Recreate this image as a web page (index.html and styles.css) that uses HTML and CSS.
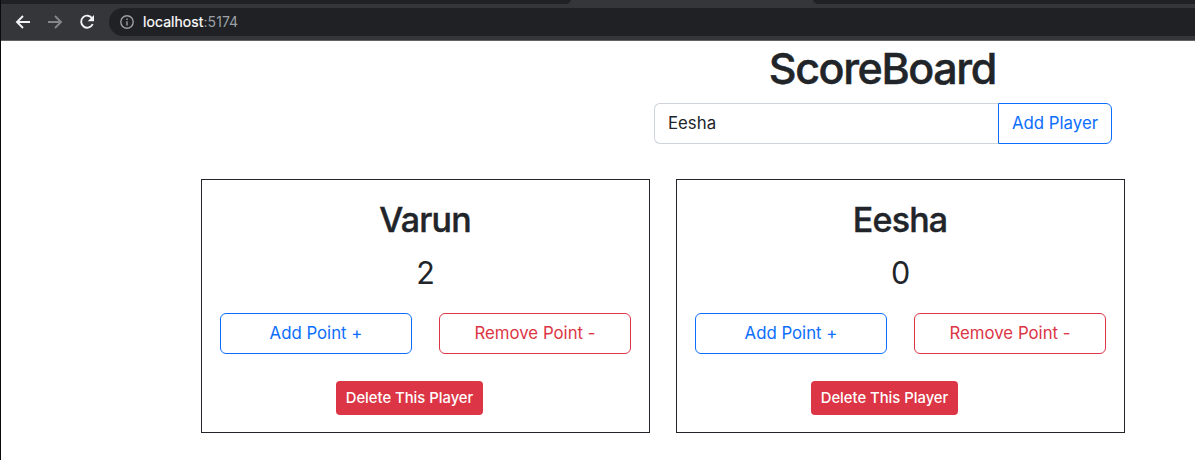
FILE: index.html
```html
<!DOCTYPE html>
<html lang="en">
<head>
<meta charset="utf-8">
<title>ScoreBoard</title>
<link rel="stylesheet" href="styles.css">
</head>
<body>
<div class="window">
  <header class="chrome">
    <div class="tabstrip">
      <div class="tabs-left"></div>
      <div class="tab-active"></div>
      <div class="tabs-right"></div>
    </div>
    <div class="toolbar">
      <svg class="nav" viewBox="0 0 16 16"><path d="M15 8H2.2M8 2L2 8l6 6" /></svg>
      <svg class="nav nav-off" viewBox="0 0 16 16"><path d="M1 8h12.8M8 2l6 6-6 6" /></svg>
      <svg class="nav" viewBox="0 0 16 16"><path d="M13.2 4.4A6 6 0 1 0 13.7 10" /><path class="solid" d="M15 1v6.3H8.7z" /></svg>
      <div class="address">
        <svg class="info" viewBox="0 0 14 14"><circle cx="7" cy="7" r="6.2" /><path d="M7 6.2v4.2M7 3.6v1.5" /></svg>
        <span class="url"><span class="host">localhost</span>:5174</span>
      </div>
    </div>
  </header>
  <main class="page">
    <h1 class="title">ScoreBoard</h1>
    <form class="add-form">
      <div class="field">Eesha</div>
      <button type="button" class="btn add-player">Add Player</button>
    </form>
    <div class="players">
      <section class="card">
        <h2 class="name">Varun</h2>
        <p class="score">2</p>
        <div class="actions">
          <button class="btn primary">Add Point +</button>
          <button class="btn danger">Remove Point -</button>
        </div>
        <button class="delete">Delete This Player</button>
      </section>
      <section class="card">
        <h2 class="name">Eesha</h2>
        <p class="score">0</p>
        <div class="actions">
          <button class="btn primary">Add Point +</button>
          <button class="btn danger">Remove Point -</button>
        </div>
        <button class="delete">Delete This Player</button>
      </section>
    </div>
  </main>
</div>
</body>
</html>
```
FILE: styles.css
```css
* { box-sizing: border-box; }
body {
  margin: 0;
  background: #fff;
  color: #212529;
  font-family: Inter, "Liberation Sans", sans-serif;
  overflow: hidden;
}
.window { height: 460px; border-left: 1px solid #0b0b0c; }
.chrome { height: 41px; background: #35363a; border-bottom: 1px solid #626266; }
.tabstrip { display: flex; height: 4px; }
.tabs-left { width: 570px; background: #202124; border-bottom-right-radius: 6px 4px; }
.tab-active { width: 242px; }
.tabs-right { flex: 1; background: #202124; border-bottom-left-radius: 6px 4px; }
.toolbar { display: flex; align-items: center; height: 36px; padding-left: 14px; }
.nav { width: 16px; height: 16px; margin-right: 16px; fill: none; stroke: #f1f3f4; stroke-width: 1.9; }
.nav-off { stroke: #85868a; }
.nav .solid { fill: #f1f3f4; stroke: none; }
.address {
  flex: 1;
  display: flex;
  align-items: center;
  height: 28px;
  margin-left: -2px;
  padding-left: 11px;
  background: #202124;
  border-radius: 14px 0 0 14px;
}
.info { width: 14px; height: 14px; fill: none; stroke: #9aa0a6; stroke-width: 1.4; }
.url { margin-left: 9px; font-size: 14px; line-height: 28px; letter-spacing: 0.07px; color: #9aa0a6; }
.host { color: #fff; -webkit-text-stroke: 0.2px #fff; }
.page { width: 924px; margin-left: 200px; }
.title { width: 458px; margin: 0 13px 0 auto; padding-top: 1px; font-size: 43px; line-height: 52px; font-weight: 500; letter-spacing: -1.4px; text-indent: -1.4px; text-align: center; -webkit-text-stroke: 0.5px #212529; }
.add-form { display: flex; width: 458px; height: 41px; margin: 9px 13px 0 auto; }
.field {
  flex: 1;
  padding-left: 13px;
  border: 1px solid #ced4da;
  border-right: 0;
  border-radius: 6px 0 0 6px;
  font-size: 16.8px;
  line-height: 38px;
}
.btn {
  display: block;
  padding: 0 0 1px;
  background: #fff;
  border: 1px solid #0d6efd;
  border-radius: 6px;
  color: #0d6efd;
  font: 400 16.8px/38px Inter, "Liberation Sans", sans-serif;
}
.add-player { width: 114px; border-radius: 0 6px 6px 0; }
.players { display: grid; grid-template-columns: 449px 449px; gap: 26px; margin-top: 35px; }
.card { height: 254px; padding: 19px 18px 0; border: 1px solid #212529; }
.name { margin: 0; font-size: 34px; line-height: 41px; font-weight: 500; letter-spacing: -0.8px; text-indent: -0.8px; text-align: center; -webkit-text-stroke: 0.4px #212529; }
.score { margin: 15px 0 0; font-size: 30.5px; line-height: 36px; text-align: center; }
.actions { display: grid; grid-template-columns: 192px 192px; gap: 27px; margin-top: 22px; }
.actions .btn { height: 41px; }
.actions .danger { border-color: #dc3545; color: #dc3545; }
.delete {
  display: block;
  width: 147px;
  height: 34px;
  margin: 27px 0 0 116px;
  padding: 0;
  background: #dc3545;
  border: 0;
  border-radius: 4px;
  color: #fff;
  font: 500 14.8px/34px Inter, "Liberation Sans", sans-serif;
}
```
